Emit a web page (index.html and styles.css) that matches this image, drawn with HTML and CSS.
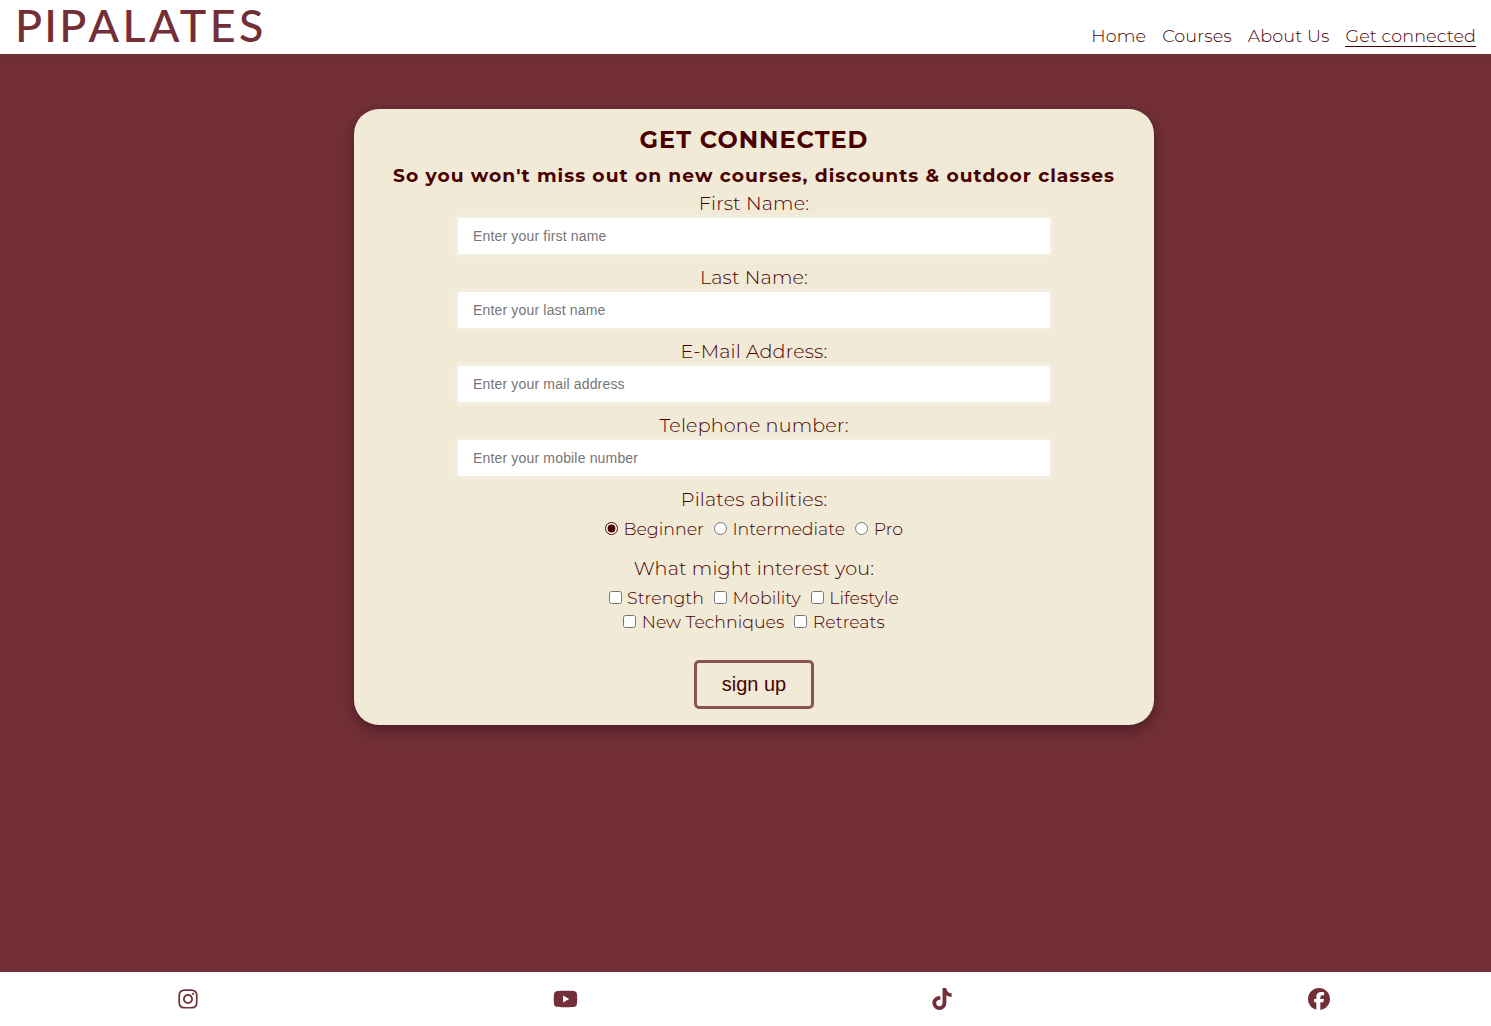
FILE: index.html
```html
<!DOCTYPE html>
<html lang="en">
<head>
<meta charset="utf-8">
<title>Pipalates – Get connected</title>
<link rel="stylesheet" href="styles.css">
</head>
<body>
<header class="header">
  <div class="logo"><span>PIP</span>ALATES</div>
  <nav class="nav">
    <a>Home</a><a>Courses</a><a>About Us</a><a class="active">Get connected</a>
  </nav>
</header>
<main class="main">
  <form class="card">
    <h1>GET CONNECTED</h1>
    <h2>So you won't miss out on new courses, discounts &amp; outdoor classes</h2>
    <label class="field" for="first">First Name:</label>
    <input class="text" id="first" type="text" placeholder="Enter your first name">
    <label class="field" for="last">Last Name:</label>
    <input class="text" id="last" type="text" placeholder="Enter your last name">
    <label class="field" for="mail">E-Mail Address:</label>
    <input class="text" id="mail" type="email" placeholder="Enter your mail address">
    <label class="field" for="phone">Telephone number:</label>
    <input class="text" id="phone" type="tel" placeholder="Enter your mobile number">
    <div class="field">Pilates abilities:</div>
    <div class="options abilities">
      <label><input type="radio" name="level" checked>Beginner</label>
      <label><input type="radio" name="level">Intermediate</label>
      <label><input type="radio" name="level">Pro</label>
    </div>
    <div class="field">What might interest you:</div>
    <div class="options first-row">
      <label><input type="checkbox">Strength</label>
      <label><input type="checkbox">Mobility</label>
      <label><input type="checkbox">Lifestyle</label>
    </div>
    <div class="options">
      <label><input type="checkbox">New Techniques</label>
      <label><input type="checkbox">Retreats</label>
    </div>
    <button class="submit" type="button">sign up</button>
  </form>
</main>
<footer class="footer">
  <div class="social">
    <a><svg width="20" height="22" viewBox="0 0 448 512"><path d="M224 141c-63.600 0-114.900 51.300-114.900 114.900S160.400 370.800 224 370.800 338.900 319.500 338.900 255.900 287.600 141 224 141zm0 189.600c-41.100 0-74.700-33.500-74.700-74.700s33.500-74.700 74.700-74.700 74.700 33.500 74.700 74.700-33.600 74.700-74.700 74.700zm146.400-194.300c0 14.900-12 26.800-26.800 26.800-14.900 0-26.800-12-26.800-26.800s12-26.800 26.800-26.800 26.800 12 26.800 26.800zm76.100 27.200c-1.700-35.900-9.900-67.700-36.200-93.900-26.200-26.200-58-34.400-93.900-36.200-37-2.100-147.900-2.100-184.900 0-35.800 1.700-67.600 9.900-93.900 36.100s-34.400 58-36.200 93.900c-2.100 37-2.100 147.900 0 184.900 1.700 35.900 9.900 67.700 36.200 93.900s58 34.400 93.900 36.200c37 2.100 147.900 2.100 184.900 0 35.900-1.700 67.700-9.900 93.900-36.200 26.200-26.200 34.400-58 36.200-93.900 2.100-37 2.100-147.800 0-184.800zM398.800 388c-7.800 19.600-22.900 34.700-42.600 42.600-29.500 11.700-99.500 9-132.100 9s-102.700 2.600-132.100-9c-19.600-7.800-34.700-22.900-42.600-42.600-11.700-29.500-9-99.500-9-132.100s-2.600-102.700 9-132.100c7.800-19.600 22.900-34.700 42.600-42.600 29.500-11.700 99.500-9 132.100-9s102.700-2.600 132.100 9c19.600 7.800 34.700 22.900 42.600 42.600 11.700 29.500 9 99.500 9 132.100s2.700 102.700-9 132.100z"/></svg></a>
    <a><svg width="25" height="22" viewBox="0 0 576 512"><path d="M549.700 124.100c-6.300-23.700-24.800-42.300-48.300-48.600C458.800 64 288 64 288 64S117.200 64 74.600 75.500c-23.500 6.300-42 24.900-48.300 48.600C14.900 167 14.900 256.400 14.900 256.400s0 89.400 11.400 132.300c6.300 23.700 24.800 41.500 48.300 47.800C117.200 448 288 448 288 448s170.800 0 213.400-11.500c23.500-6.300 42-24.200 48.300-47.800 11.400-42.900 11.400-132.300 11.400-132.300s0-89.400-11.400-132.300zM232.200 337.600V175.200l142.700 81.200z"/></svg></a>
    <a><svg width="20" height="22" viewBox="0 0 448 512"><path d="M448 209.900a210.100 210.100 0 0 1-122.800-39.300v178.800A162.600 162.600 0 1 1 185 188.300v89.900a74.600 74.600 0 1 0 52.200 71.200V0h88a121.200 121.200 0 0 0 1.900 22.200 122.200 122.200 0 0 0 53.900 80.200 121.400 121.400 0 0 0 67 20.100z"/></svg></a>
    <a><svg width="22" height="22" viewBox="0 0 512 512"><path d="M512 256C512 114.600 397.400 0 256 0S0 114.600 0 256c0 120 82.700 220.800 194.200 248.500V334.200h-52.800V256h52.800v-33.700c0-87.100 39.400-127.500 125-127.500 16.200 0 44.200 3.200 55.700 6.400V172c-6-.6-16.500-1-29.600-1-42 0-58.200 15.900-58.200 57.200V256h83.600l-14.400 78.200h-69.300v175.900C413.800 494.800 512 386.900 512 256z"/></svg></a>
  </div>
</footer>
</body>
</html>
```
FILE: styles.css
```css
* { box-sizing: border-box; }
body {
  margin: 0;
  height: 1026px;
  display: flex;
  flex-direction: column;
  font-family: Montserrat, "Liberation Sans", sans-serif;
  font-weight: 300;
  color: #4a0000;
}
.header {
  height: 54px;
  padding: 0 15px 7px 15px;
  display: flex;
  justify-content: space-between;
  align-items: flex-end;
  background: #fff;
}
.logo {
  font: 500 44.800px/54px Lato, sans-serif;
  letter-spacing: 3.400px;
  color: #722f37;
  margin-bottom: -5px;
}
.logo span { letter-spacing: 2.200px; }
.nav { display: flex; gap: 16px; font-size: 17.600px; letter-spacing: .1px; }
.nav a { line-height: 20px; border-bottom: 1px solid transparent; white-space: nowrap; }
.nav .active { border-color: #4a0000; }
.main {
  flex: 1;
  padding: 55px 0 0 354px;
  background: linear-gradient(#6b2f35, #722f37 12px);
}
.card {
  width: 800px;
  height: 616px;
  padding-top: 16px;
  display: flex;
  flex-direction: column;
  align-items: center;
  border-radius: 25px;
  background: #f0ead6;
  box-shadow: 0 4px 8px rgba(0, 0, 0, .2), 0 6px 20px rgba(0, 0, 0, .19);
}
h1, h2 { margin: 0; white-space: nowrap; }
h1 { font-size: 24px; line-height: 30px; font-weight: 700; letter-spacing: 1px; }
h2 { font-size: 18.720px; line-height: 24px; font-weight: 700; letter-spacing: 1px; margin: 9px 0 3px; }
.field { height: 24px; line-height: 25px; font-size: 19.200px; letter-spacing: .15px; white-space: nowrap; }
.text {
  width: 598px;
  height: 42px;
  margin: 0 0 8px;
  padding: 0 15px;
  border: 3px solid #f4eee0;
  border-radius: 5px;
  background: #fff;
  font: 14px "Liberation Sans", Arial, sans-serif;
  letter-spacing: .17px;
}
.text::placeholder { color: #757575; }
.options { height: 24px; display: flex; gap: 10px; font-size: 17.400px; line-height: 24px; }
.options label { display: flex; align-items: center; gap: 5.500px; white-space: nowrap; }
.options input { width: 13px; height: 13px; margin: 0 0 1px; accent-color: #4a0000; }
.abilities { margin: 6px 0 15px; }
.first-row { margin-top: 6px; gap: 10.300px; }
.first-row label { gap: 5px; letter-spacing: .05px; }
.submit {
  width: 120px;
  height: 49px;
  margin-top: 26px;
  padding: 0;
  border: 3px solid #8a5550;
  border-radius: 5px;
  background: transparent;
  color: #4a0000;
  font: 20px "Liberation Sans", Arial, sans-serif;
}
.footer {
  height: 54px;
  background: #fff;
  overflow: hidden;
}
.social {
  width: 1507.600px;
  height: 54px;
  display: grid;
  grid-template-columns: repeat(4, 1fr);
  place-items: center;
}
.social a { display: flex; }
.social svg { fill: #722f37; }
```
